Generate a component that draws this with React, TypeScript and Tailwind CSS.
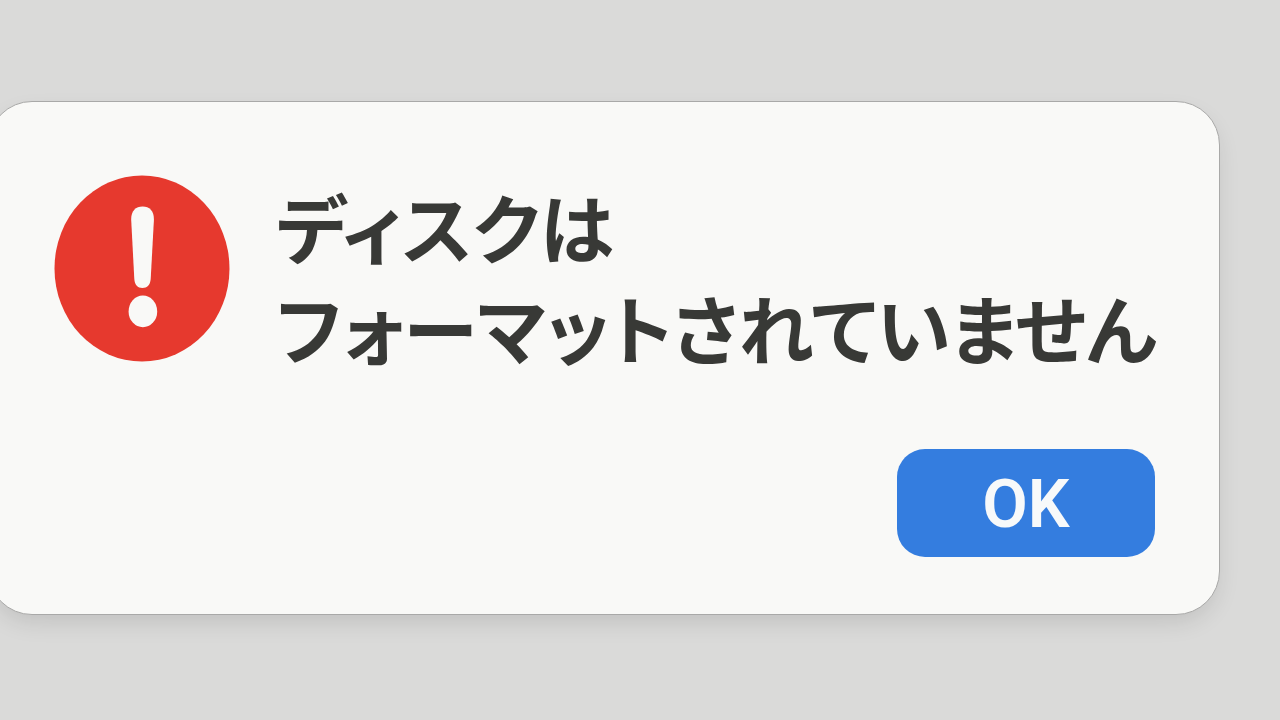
function ErrorIcon() {
  return (
    <svg
      viewBox="0 0 176 187"
      className="h-[187px] w-44 shrink-0"
      role="img"
      aria-label="エラー"
    >
      <ellipse cx="88" cy="93.5" rx="87.5" ry="93" fill="#e6392e" />
      <path
        d="M77.2 45 C76.9 36 81.5 31.4 88.6 31.4 C95.7 31.4 100.2 36 99.9 45 L96.7 104 C96.2 110 93.2 113 88.4 113 C83.6 113 80.8 110 80.3 104 Z"
        fill="#f9f9f7"
      />
      <ellipse cx="88.9" cy="136.4" rx="14.3" ry="15.8" fill="#f9f9f7" />
    </svg>
  );
}

export default function App() {
  return (
    <main className="min-h-screen overflow-hidden bg-[#dadad9] py-[101px] pr-[60px] font-['Noto_Sans_CJK_JP',sans-serif]">
      <section
        role="alertdialog"
        aria-labelledby="dialog-title"
        className="-ml-3 rounded-[44px] border border-[#a9a9a8] bg-[#f9f9f7] pt-[73px] pr-16 pb-[57px] pl-[65px] shadow-[0_10px_24px_-4px_rgba(0,0,0,0.12)]"
      >
        <div className="flex items-start gap-[46px]">
          <ErrorIcon />
          <h1
            id="dialog-title"
            className="text-[75px] leading-[101px] font-bold whitespace-nowrap text-[#383936] [font-feature-settings:'palt']"
          >
            ディスクは
            <br />
            フォーマットされていません
          </h1>
        </div>
        <div className="mt-[72px] flex justify-end">
          <button
            type="button"
            className="h-[108px] w-[258px] rounded-[28px] bg-[#347ddf] pt-1 font-[Roboto,sans-serif] text-[66px] leading-none font-semibold text-[#f7f9fa]"
          >
            OK
          </button>
        </div>
      </section>
    </main>
  );
}
